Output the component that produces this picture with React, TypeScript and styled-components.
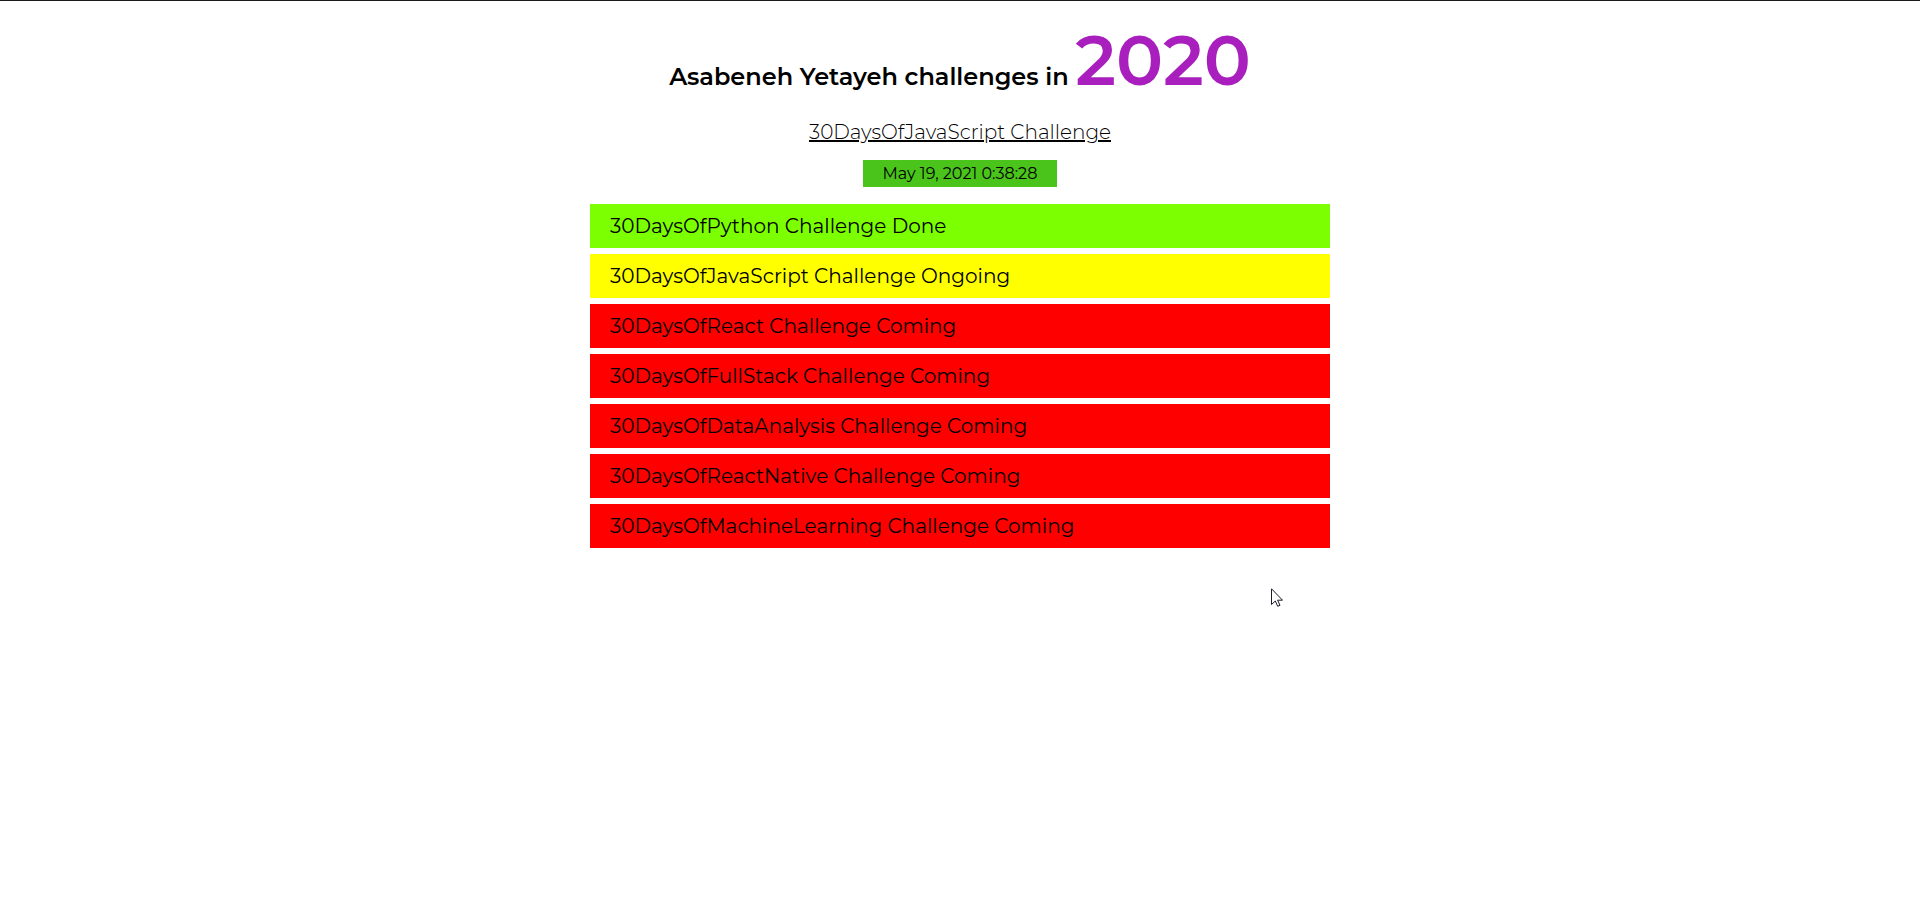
import React from "react";
import styled, { createGlobalStyle } from "styled-components";

const Global = createGlobalStyle`
  * { box-sizing: border-box; }
  body { margin: 0; background: #fff; color: #000; font-family: Montserrat, Inter, "Open Sans", sans-serif; }
`;
const Page = styled.main`
  min-height: 100vh;
  border-top: 1px solid #1c1a1d;
  display: flex;
  flex-direction: column;
  align-items: center;
  padding-top: 17px;
`;
const Title = styled.h1`
  margin: 0;
  font-size: 24px;
  line-height: 24px;
  font-weight: 600;
`;
const Year = styled.span`
  font-size: 70px;
  line-height: 84px;
  color: #a81fbd;
`;
const Subtitle = styled.h2`
  margin: 18px 0 16px;
  font-size: 20px;
  line-height: 24px;
  font-weight: 300;
  text-decoration: underline;
  text-decoration-thickness: 2px;
`;
const Clock = styled.time`
  padding: 4px 20px;
  font-size: 16px;
  line-height: 19px;
  background: #4ac41a;
`;
const Board = styled.section`
  position: relative;
  margin-top: 17px;
  width: 740px;
  max-width: 100%;
`;
const List = styled.ul`
  list-style: none;
  margin: 0;
  padding: 0;
  display: grid;
  gap: 6px;
`;
const statusColors = { Done: "#7cff00", Ongoing: "#ffff00", Coming: "#ff0000" };
type Status = keyof typeof statusColors;
const Item = styled.li<{ $status: Status }>`
  padding: 10px 20px;
  font-size: 20px;
  line-height: 24px;
  background: ${(p) => statusColors[p.$status]};
`;
const Pointer = styled.div`
  position: absolute;
  top: 100%;
  right: 47px;
  padding-top: 40px;
  line-height: 0;
`;
const challenges: [string, Status][] = [
  ["30DaysOfPython", "Done"],
  ["30DaysOfJavaScript", "Ongoing"],
  ["30DaysOfReact", "Coming"],
  ["30DaysOfFullStack", "Coming"],
  ["30DaysOfDataAnalysis", "Coming"],
  ["30DaysOfReactNative", "Coming"],
  ["30DaysOfMachineLearning", "Coming"],
];
export default function App() {
  return (
    <Page>
      <Global />
      <Title>Asabeneh Yetayeh challenges in <Year>2020</Year></Title>
      <Subtitle>30DaysOfJavaScript Challenge</Subtitle>
      <Clock dateTime="2021-05-19T00:38:28">May 19, 2021 0:38:28</Clock>
      <Board>
        <List>
          {challenges.map(([name, status]) => (
            <Item key={name} $status={status}>{`${name} Challenge ${status}`}</Item>
          ))}
        </List>
        <Pointer aria-hidden="true">
          <svg width="12" height="19" viewBox="0 0 12 19">
            <path
              d="M0.5 0.8 L0.5 16.5 L4.3 13 L6.7 18.3 L9 17.3 L6.6 12.2 L11.5 12.2 Z"
              fill="#ffffff"
              stroke="#1b1b2b"
              strokeWidth="1"
            />
          </svg>
        </Pointer>
      </Board>
    </Page>
  );
}
